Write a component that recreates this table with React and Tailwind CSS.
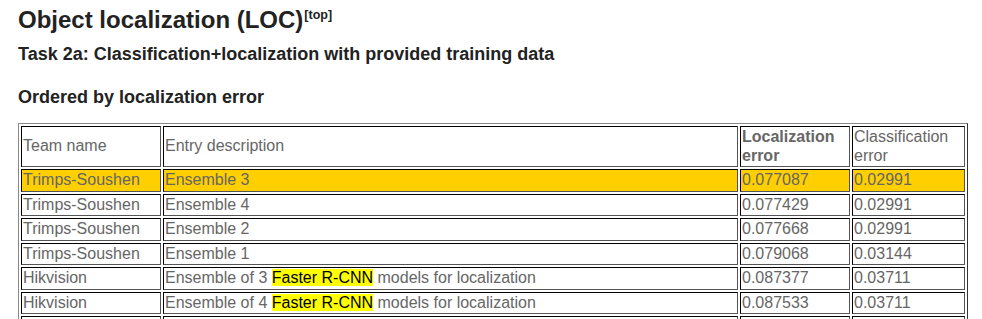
import React from 'react';

const rows = [
  { team: 'Trimps-Soushen', desc: 'Ensemble 3', loc: '0.077087', cls: '0.02991', top: true },
  { team: 'Trimps-Soushen', desc: 'Ensemble 4', loc: '0.077429', cls: '0.02991' },
  { team: 'Trimps-Soushen', desc: 'Ensemble 2', loc: '0.077668', cls: '0.02991' },
  { team: 'Trimps-Soushen', desc: 'Ensemble 1', loc: '0.079068', cls: '0.03144' },
  { team: 'Hikvision', desc: ['Ensemble of 3 ', 'Faster R-CNN', ' models for localization'], loc: '0.087377', cls: '0.03711' },
  { team: 'Hikvision', desc: ['Ensemble of 4 ', 'Faster R-CNN', ' models for localization'], loc: '0.087533', cls: '0.03711' },
  // next row only peeks in at the bottom edge
  { team: '\u00a0', desc: '\u00a0', loc: '\u00a0', cls: '\u00a0' },
];

const cell = 'p-px align-middle text-left font-normal border border-[#555] [border-style:inset] leading-[18.5px]';

function Desc({ desc }) {
  if (typeof desc === 'string') return desc;
  return (
    <>
      {desc[0]}
      <span className="bg-[#ffff00] text-black">{desc[1]}</span>
      {desc[2]}
    </>
  );
}

export default function App() {
  return (
    <div className="bg-white pl-[18px] text-[#222] font-['Liberation_Sans',Arial,sans-serif] h-[319px] overflow-hidden">
      <h1 className="text-[24px] font-bold leading-[28px] pt-[6px]">
        Object localization (LOC)
        <sup className="text-[12.5px] font-bold align-[3px] ml-px">[top]</sup>
      </h1>
      <h2 className="text-[18px] font-bold mt-[10px] leading-[21px]">
        Task 2a: Classification+localization with provided training data
      </h2>
      <h3 className="text-[18px] font-bold mt-[22px] leading-[21px]">Ordered by localization error</h3>
      <table className="mt-[15px] w-[950px] border-separate border-spacing-[2px] border border-[#888] [border-style:outset] text-[16px] text-[#666] table-fixed">
        <colgroup>
          <col className="w-[140px]" />
          <col className="w-[575px]" />
          <col className="w-[110px]" />
          <col className="w-[113px]" />
        </colgroup>
        <tbody>
          <tr>
            <th className={cell}>Team name</th>
            <th className={cell}>Entry description</th>
            <th className={cell + ' !font-bold'}>Localization error</th>
            <th className={cell}>Classification error</th>
          </tr>
          {rows.map((r, i) => (
            <tr key={i} className={r.top ? 'bg-[#ffcf00]' : ''}>
              <td className={cell}>{r.team}</td>
              <td className={cell}><Desc desc={r.desc} /></td>
              <td className={cell}>{r.loc}</td>
              <td className={cell}>{r.cls}</td>
            </tr>
          ))}
        </tbody>
      </table>
    </div>
  );
}
